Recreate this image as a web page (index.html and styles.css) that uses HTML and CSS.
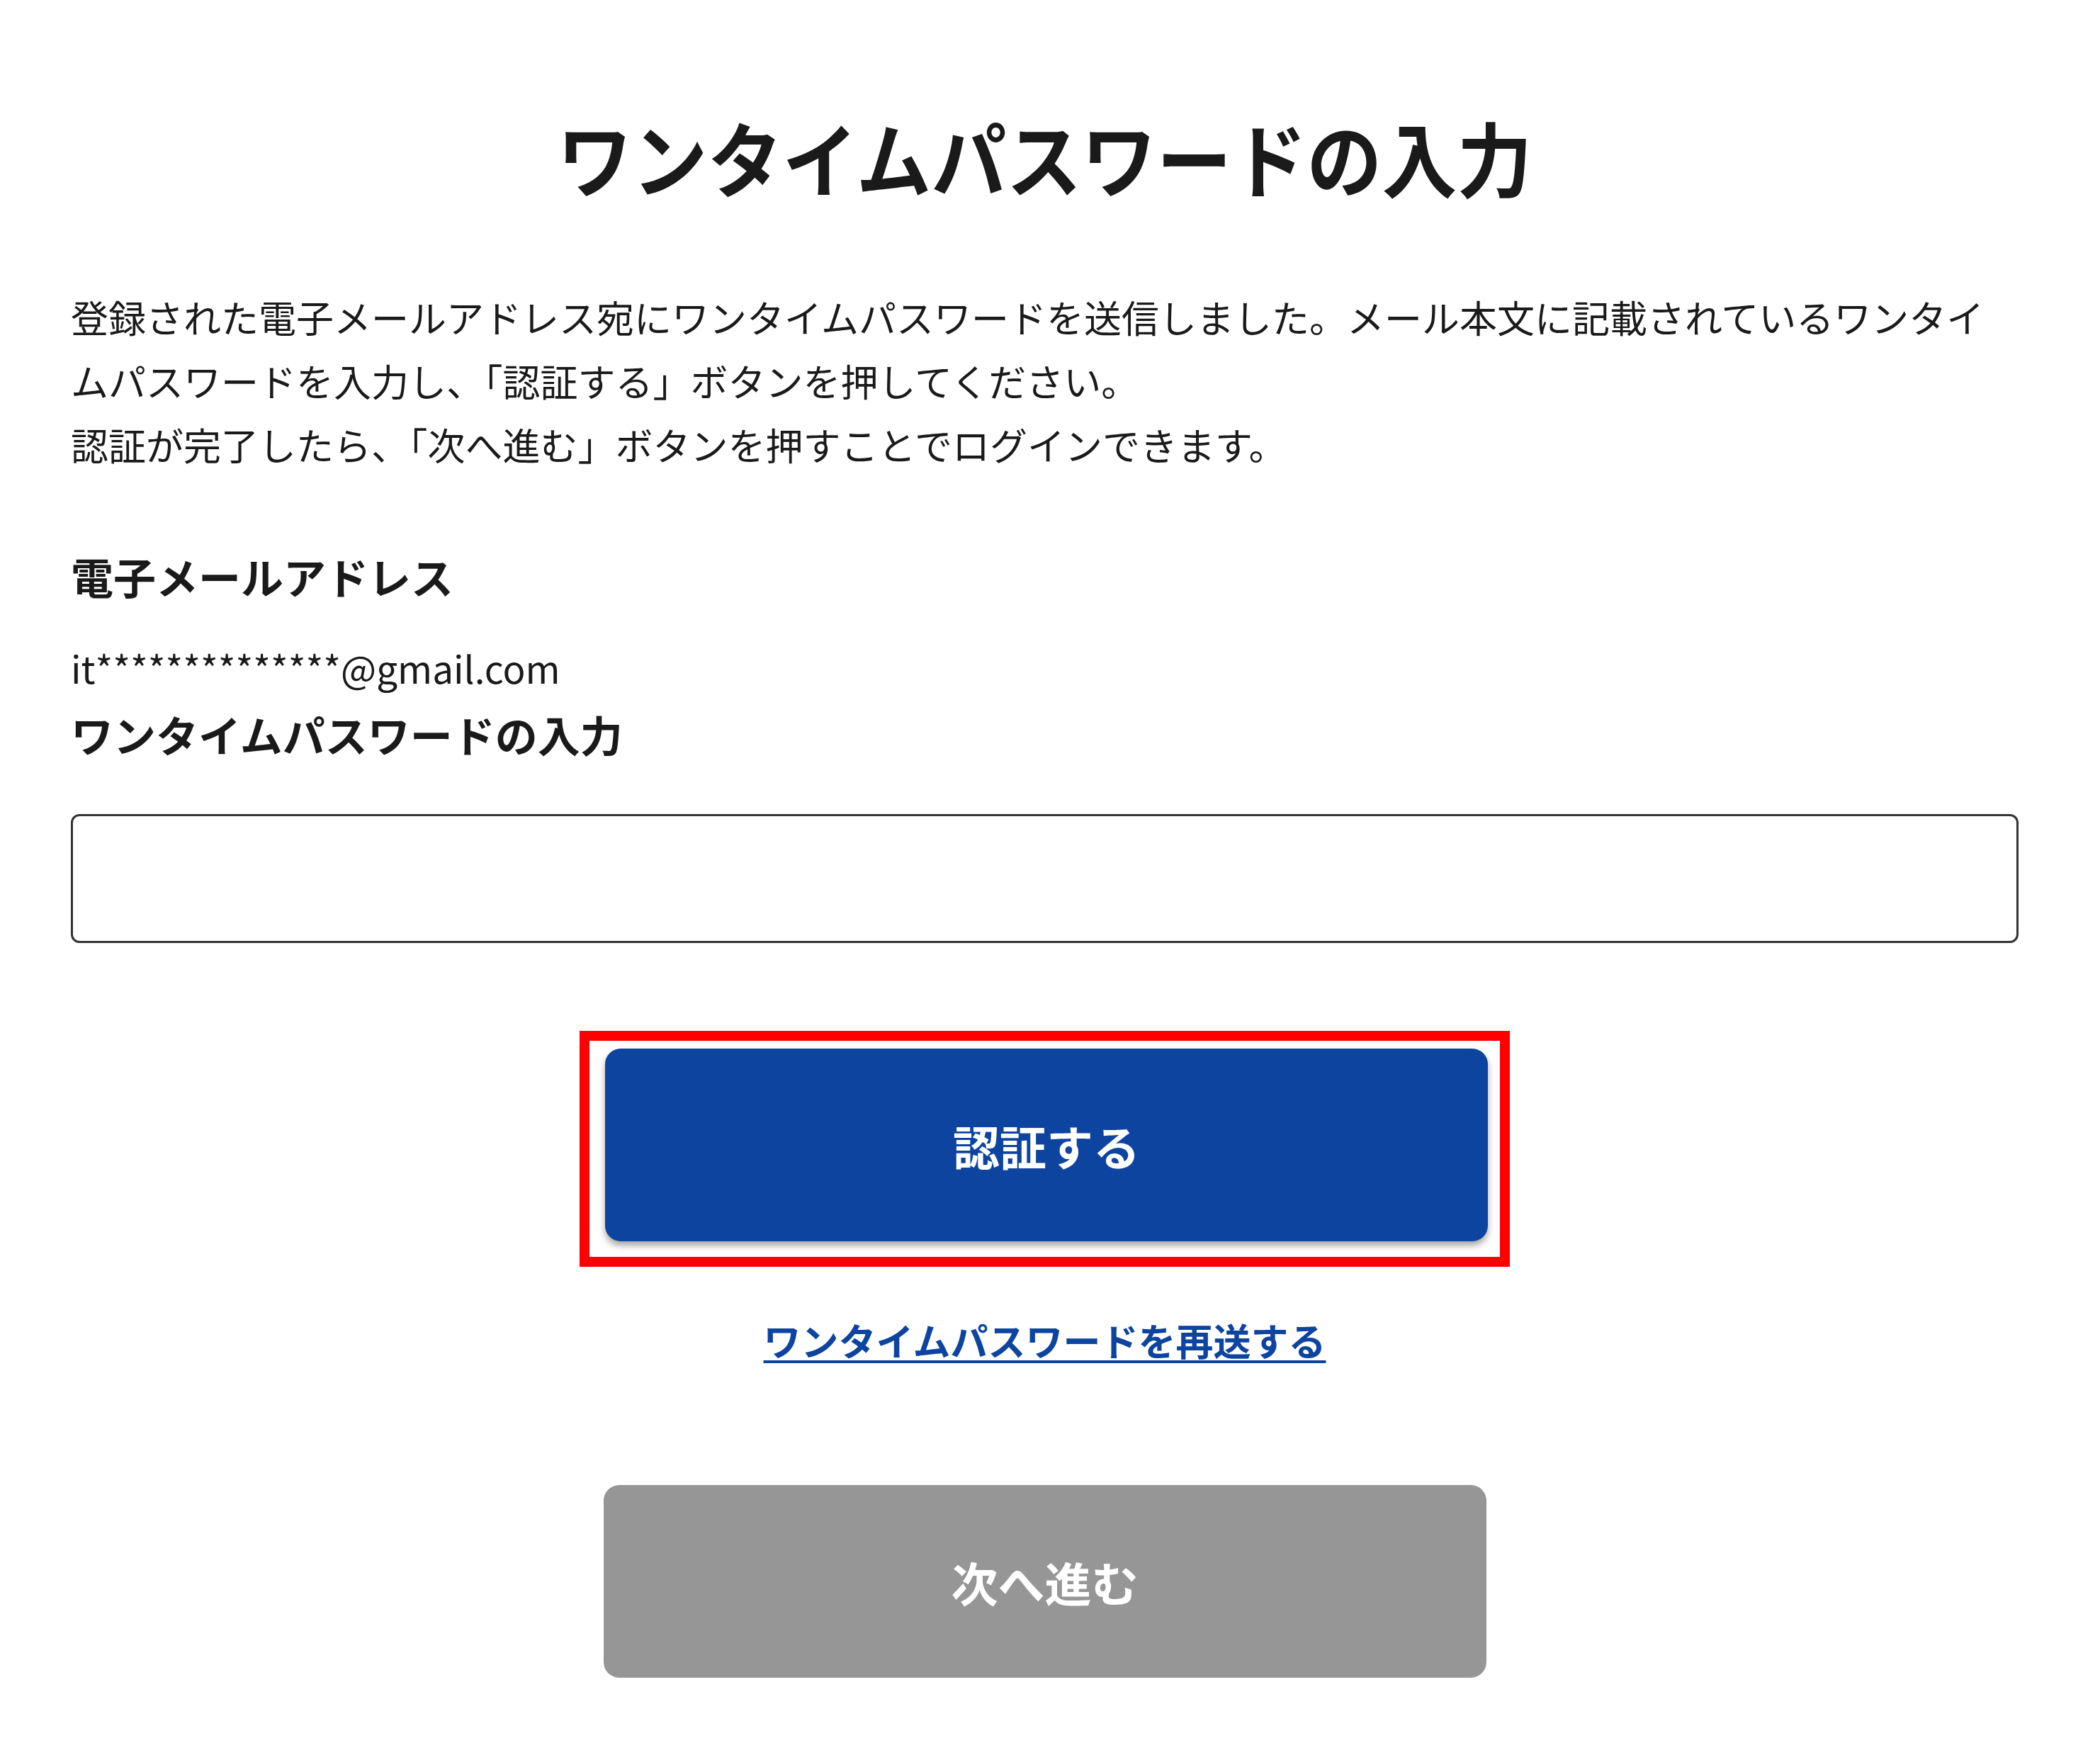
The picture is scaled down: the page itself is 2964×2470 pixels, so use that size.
FILE: index.html
```html
<!DOCTYPE html>
<html lang="ja">
<head>
<meta charset="utf-8">
<title>ワンタイムパスワードの入力</title>
<link rel="stylesheet" href="styles.css">
</head>
<body>
<main class="page">
  <h1 class="title">ワンタイムパスワードの入力</h1>
  <p class="lead">登録された電子メールアドレス宛にワンタイムパスワードを送信しました。メール本文に記載されているワンタイムパスワードを入力し、「認証する」ボタンを押してください。<br>認証が完了したら、「次へ進む」ボタンを押すことでログインできます。</p>
  <section class="field">
    <h2 class="label label-email">電子メールアドレス</h2>
    <p class="email">it**************@gmail.com</p>
    <h2 class="label">ワンタイムパスワードの入力</h2>
    <input class="otp-input" type="text" aria-label="ワンタイムパスワード">
  </section>
  <div class="actions">
    <div class="highlight">
      <button class="btn btn-primary" type="button">認証する</button>
    </div>
    <a class="resend" href="#">ワンタイムパスワードを再送する</a>
    <button class="btn btn-disabled" type="button">次へ進む</button>
  </div>
</main>
</body>
</html>
```
FILE: styles.css
```css
html, body {
  margin: 0;
  padding: 0;
  background: #ffffff;
}
body {
  font-family: "Noto Sans CJK JP", "Noto Sans", sans-serif;
  color: #1a1a1a;
}
.page {
  padding: 141px 115px 0 100px;
}
.title {
  margin: 0;
  font-size: 106px;
  line-height: 159px;
  font-weight: 700;
  text-align: center;
  transform: scaleY(1.08);
}
.lead {
  margin: 102px 0 0;
  font-size: 53px;
  line-height: 90px;
  font-weight: 400;
}
.field {
  margin-top: 96px;
}
.label {
  margin: 0;
  font-size: 60px;
  line-height: 90px;
  font-weight: 700;
}
.email {
  margin: 39px 0 4px;
  font-size: 53px;
  line-height: 90px;
}
.otp-input {
  display: block;
  box-sizing: border-box;
  width: 100%;
  height: 182px;
  margin: 68px 0 0;
  border: 3px solid #333333;
  border-radius: 12px;
  background: #ffffff;
  font: inherit;
  font-size: 53px;
  padding: 0 30px;
}
.actions {
  display: flex;
  flex-direction: column;
  align-items: center;
  margin-top: 124px;
}
.highlight {
  border: 14px solid #ff0000;
  padding: 11px 17px 22px 22px;
}
.btn {
  display: block;
  width: 1246px;
  height: 272px;
  border: none;
  border-radius: 22px;
  font-family: "Noto Sans CJK JP", sans-serif;
  font-size: 66px;
  font-weight: 700;
  color: #ffffff;
  cursor: pointer;
}
.btn-primary {
  background: #0d44a0;
  box-shadow: 0 6px 10px rgba(0, 0, 0, 0.35);
}
.btn-disabled {
  background: #969696;
  margin-top: 165px;
}
.resend {
  margin-top: 63px;
  font-size: 53px;
  line-height: 80px;
  font-weight: 700;
  color: #0d44a0;
  text-decoration: underline;
  text-decoration-thickness: 4px;
  text-underline-offset: 6px;
}
```
